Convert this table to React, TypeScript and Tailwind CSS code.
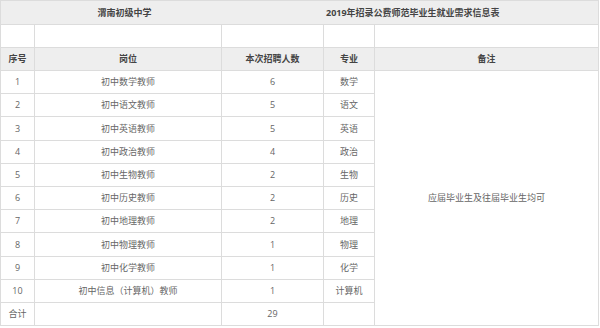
import React from "react";

const rows = [
  { no: "1", post: "初中数学教师", count: "6", major: "数学" },
  { no: "2", post: "初中语文教师", count: "5", major: "语文" },
  { no: "3", post: "初中英语教师", count: "5", major: "英语" },
  { no: "4", post: "初中政治教师", count: "4", major: "政治" },
  { no: "5", post: "初中生物教师", count: "2", major: "生物" },
  { no: "6", post: "初中历史教师", count: "2", major: "历史" },
  { no: "7", post: "初中地理教师", count: "2", major: "地理" },
  { no: "8", post: "初中物理教师", count: "1", major: "物理" },
  { no: "9", post: "初中化学教师", count: "1", major: "化学" },
  { no: "10", post: "初中信息（计算机）教师", count: "1", major: "计算机" },
];

// row heights so the lines land where the reference has them
const heights = ["h-[23px]", "h-[23px]", "h-[24px]", "h-[23px]", "h-[23px]", "h-[23px]", "h-[23px]", "h-[24px]", "h-[23px]", "h-[23px]"];

const cell = "border border-[#dcdcdc] text-center align-middle p-0";

export default function App() {
  return (
    <div
      className="w-[600px] h-[328px] bg-white text-[9px] text-[#666]"
      style={{ fontFamily: '"Open Sans", "Noto Sans CJK SC", sans-serif' }}
    >
      <table className="w-[598px] border-collapse table-fixed">
        <colgroup>
          <col className="w-[34px]" />
          <col className="w-[187px]" />
          <col className="w-[102px]" />
          <col className="w-[51px]" />
          <col className="w-[224px]" />
        </colgroup>
        <tbody>
          <tr className="h-[24px] bg-[#eeeeee]">
            <td colSpan={5} className="border border-[#dcdcdc] p-0 font-bold text-[#444]">
              <div className="flex items-center">
                <div className="w-[247px] text-center">渭南初级中学</div>
                <div className="pl-[78px]">2019年招录公费师范毕业生就业需求信息表</div>
              </div>
            </td>
          </tr>
          <tr className="h-[23px]">
            <td className={cell}></td>
            <td className={cell}></td>
            <td className={cell}></td>
            <td className={cell}></td>
            <td className={cell}></td>
          </tr>
          <tr className="h-[23px] bg-[#eeeeee] font-bold text-[#444]">
            <td className={cell}>序号</td>
            <td className={cell}>岗位</td>
            <td className={cell}>本次招聘人数</td>
            <td className={cell}>专业</td>
            <td className={cell}>备注</td>
          </tr>
          {rows.map((r, i) => (
            <tr key={r.no} className={heights[i]}>
              <td className={cell}>{r.no}</td>
              <td className={cell}>{r.post}</td>
              <td className={cell}>{r.count}</td>
              <td className={cell}>{r.major}</td>
              {i === 0 && (
                <td rowSpan={11} className={cell}>
                  应届毕业生及往届毕业生均可
                </td>
              )}
            </tr>
          ))}
          <tr className="h-[23px]">
            <td className={cell}>合计</td>
            <td className={cell}></td>
            <td className={cell}>29</td>
            <td className={cell}></td>
          </tr>
        </tbody>
      </table>
    </div>
  );
}
